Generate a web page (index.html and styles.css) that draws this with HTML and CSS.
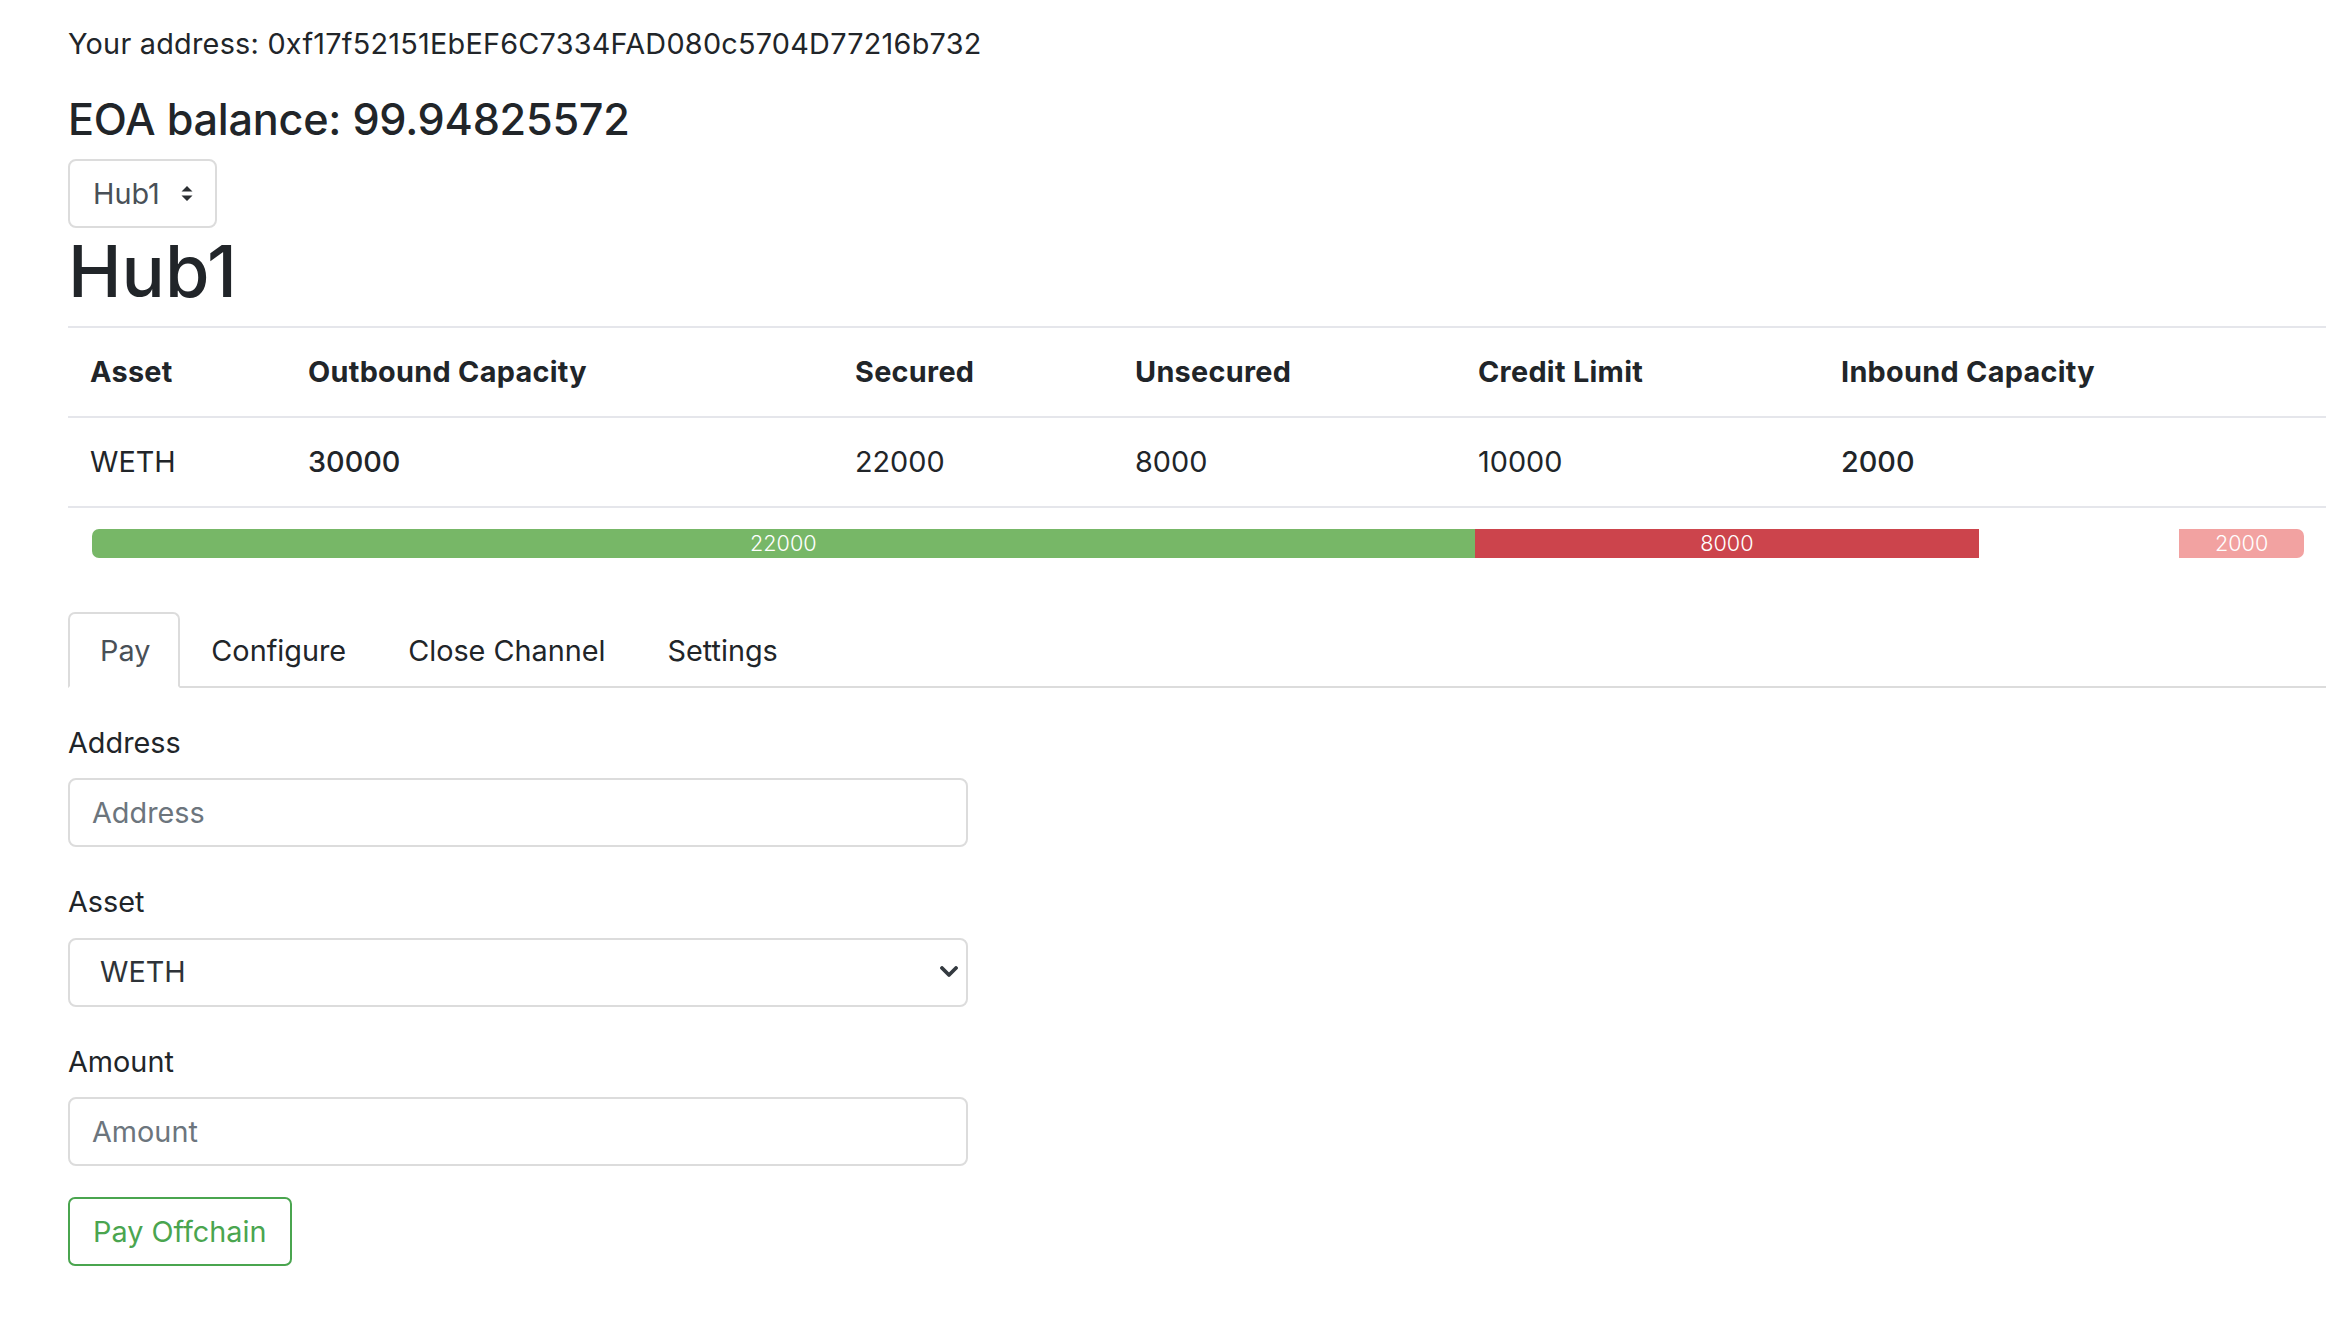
FILE: index.html
```html
<!DOCTYPE html>
<html lang="en">
<head>
<meta charset="utf-8">
<title>Hub1</title>
<link rel="stylesheet" href="styles.css">
</head>
<body>
<div class="page">
  <p class="addr">Your address: 0xf17f52151EbEF6C7334FAD080c5704D77216b732</p>
  <h4 class="balance">EOA balance: 99.94825572</h4>
  <div class="hub-select">
    <span>Hub1</span>
    <svg class="updown" width="12" height="15" viewBox="0 0 12 15"><path d="M6 0 L11.5 5.5 L0.5 5.5 Z M6 15 L0.5 9.5 L11.5 9.5 Z" fill="#2b2f33"/></svg>
  </div>
  <h1 class="hub-title">Hub1</h1>
  <table class="channels">
    <colgroup>
      <col class="c-asset"><col class="c-out"><col class="c-sec"><col class="c-unsec"><col class="c-credit"><col class="c-in">
    </colgroup>
    <thead>
      <tr><th>Asset</th><th>Outbound Capacity</th><th>Secured</th><th>Unsecured</th><th>Credit Limit</th><th>Inbound Capacity</th></tr>
    </thead>
    <tbody>
      <tr><td>WETH</td><td class="em">30000</td><td>22000</td><td>8000</td><td>10000</td><td class="em">2000</td></tr>
      <tr class="bar-row">
        <td colspan="6">
          <div class="progress">
            <div class="seg seg-green" style="width:62.51%">22000</div>
            <div class="seg seg-red" style="width:22.8%">8000</div>
            <div class="seg seg-gap" style="width:9.05%"></div>
            <div class="seg seg-pink" style="width:5.64%">2000</div>
          </div>
        </td>
      </tr>
    </tbody>
  </table>
  <ul class="tabs">
    <li class="tab active">Pay</li>
    <li class="tab">Configure</li>
    <li class="tab">Close Channel</li>
    <li class="tab">Settings</li>
  </ul>
  <form class="pay-form">
    <div class="group">
      <label class="lbl">Address</label>
      <input class="field" type="text" placeholder="Address">
    </div>
    <div class="group">
      <label class="lbl">Asset</label>
      <div class="field select-field">
        <span>WETH</span>
        <svg class="chev" width="18" height="12" viewBox="0 0 18 12"><path d="M2 2 L9 9 L16 2" fill="none" stroke="#343a40" stroke-width="3.8" stroke-linecap="round" stroke-linejoin="round"/></svg>
      </div>
    </div>
    <div class="group">
      <label class="lbl">Amount</label>
      <input class="field" type="text" placeholder="Amount">
    </div>
    <button class="btn-pay" type="button">Pay Offchain</button>
  </form>
</div>
</body>
</html>
```

FILE: styles.css
```css
* { box-sizing: border-box; }
html, body { margin: 0; padding: 0; background: #fff; }
body {
  font-family: Inter, "Noto Sans", "Liberation Sans", sans-serif;
  font-size: 28.8px;
  line-height: 43.2px;
  color: #212529;
  overflow: hidden;
}
.page {
  padding: 22px 0 0 68px;
}
.addr {
  margin: 0 0 28px 0;
  letter-spacing: 0.25px;
}
.balance {
  margin: 0 0 14px 0;
  font-size: 43.2px;
  line-height: 52px;
  font-weight: 500;
  letter-spacing: -0.25px;
}
.hub-select {
  display: inline-flex;
  align-items: center;
  height: 69px;
  padding: 0 22px 0 23px;
  border: 2px solid #dcdcdc;
  border-radius: 8px;
  color: #495057;
  gap: 21px;
}
.hub-select .updown { display: block; }
.hub-title {
  margin: 0 0 12px 0;
  font-size: 72px;
  line-height: 86px;
  font-weight: 500;
}
.channels {
  width: 2258px;
  border-collapse: collapse;
  table-layout: fixed;
  margin-bottom: 32px;
}
.c-asset { width: 218px; }
.c-out { width: 547px; }
.c-sec { width: 280px; }
.c-unsec { width: 343px; }
.c-credit { width: 363px; }
.c-in { width: 507px; }
.channels th, .channels td {
  text-align: left;
  padding: 22px 22px;
  line-height: 44px;
  border-top: 2px solid #e5e6eb;
  vertical-align: middle;
}
.channels th { font-weight: 700; letter-spacing: 0.3px; }
.channels td { font-weight: 400; }
.channels td.em { font-weight: 500; }
.bar-row td { padding: 21px 22px 22px 24px; }
.progress {
  display: flex;
  height: 29px;
  border-radius: 7px;
  overflow: hidden;
}
.seg {
  height: 29px;
  color: #fff;
  font-size: 21.6px;
  line-height: 29px;
  text-align: center;
  font-weight: 300;
}
.seg-green { background: #77b767; }
.seg-red { background: #cc444c; }
.seg-gap { background: transparent; }
.seg-pink { background: #f2a2a1; }
.tabs {
  list-style: none;
  margin: 0;
  padding: 0;
  display: flex;
  border-bottom: 2px solid #dcdcdc;
}
.tab {
  padding: 14.4px 29px;
  border: 2px solid transparent;
  border-top-left-radius: 7px;
  border-top-right-radius: 7px;
  margin-bottom: -2px;
  color: #212529;
}
.tab.active {
  padding-left: 30px;
  padding-right: 28px;
  color: #495057;
  border-color: #dcdcdc #dcdcdc #fff;
  background: #fff;
}
.pay-form {
  padding-top: 33px;
  width: 968px;
}
.group { margin-bottom: 33px; }
.group:last-of-type { margin-bottom: 31px; }
.lbl {
  display: block;
  margin-bottom: 14px;
}
.field {
  display: block;
  width: 900px;
  height: 69px;
  padding: 0 22px;
  border: 2px solid #dcdcdc;
  border-radius: 8px;
  font-family: inherit;
  font-size: 28.8px;
  color: #495057;
  background: #fff;
  outline: none;
}
.field::placeholder { color: #6c757d; }
.select-field {
  display: flex;
  align-items: center;
  justify-content: space-between;
  padding: 0 8px 0 30px;
  color: #2e3338;
}
.chev { display: block; }
.btn-pay {
  display: block;
  height: 69px;
  padding: 0 24px 0 23px;
  border: 2px solid #4aa54f;
  border-radius: 7px;
  background: #fff;
  color: #4aa54f;
  font-family: inherit;
  font-size: 28.8px;
  line-height: 43.2px;
}
```
